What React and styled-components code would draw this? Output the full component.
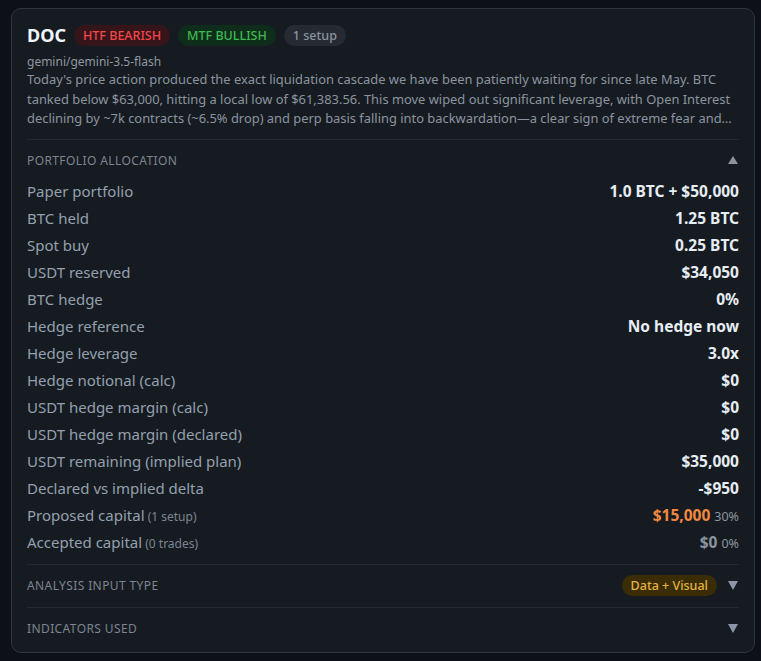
import React from 'react';
import styled, { createGlobalStyle } from 'styled-components';

const GlobalStyle = createGlobalStyle`
  body {
    margin: 0;
    background: #0d1117;
    font-family: 'Segoe UI', 'Noto Sans', 'Liberation Sans', sans-serif;
  }
`;

const Page = styled.div`
  padding: 8px 6px 6px 11px;
`;

const Card = styled.div`
  background: #161b22;
  border: 1px solid #30363d;
  border-radius: 10px;
  padding: 14px 15px 2px;
`;

const Header = styled.div`
  display: flex;
  align-items: center;
  gap: 8px;
  height: 24px;
`;

const Ticker = styled.span`
  font-size: 18px;
  font-weight: 700;
  color: #f0f6fc;
`;

const tones = {
  red: { bg: '#351519', fg: '#f5474b' },
  green: { bg: '#0f2d1b', fg: '#3fb950' },
  grey: { bg: '#262b33', fg: '#8b949e' },
  amber: { bg: '#3a2d05', fg: '#e3b341' },
};

const Pill = styled.span`
  display: inline-flex;
  align-items: center;
  height: 21px;
  padding: 0 9px;
  border-radius: 11px;
  font-size: 12.5px;
  font-weight: 500;
  background: ${p => tones[p.tone].bg};
  color: ${p => tones[p.tone].fg};
`;

const Model = styled.div`
  margin-top: 7px;
  font-size: 12px;
  line-height: 16px;
  color: #9198a1;
`;

const Summary = styled.p`
  margin: 0 0 10px;
  padding-right: 6px;
  font-size: 12.9px;
  line-height: 19.5px;
  color: #8b949e;
  display: -webkit-box;
  -webkit-line-clamp: 3;
  -webkit-box-orient: vertical;
  overflow: hidden;
`;

const Section = styled.div`
  border-top: 1px solid #262b33;
  padding: ${p => (p.open ? '12px 0 8px' : '0')};
`;

const SectionHead = styled.div`
  display: flex;
  align-items: center;
  justify-content: space-between;
  min-height: ${p => (p.open ? '16px' : '42px')};
`;

const SectionTitle = styled.span`
  font-size: 12px;
  letter-spacing: 0.4px;
  text-transform: uppercase;
  color: #7d8590;
`;

const HeadRight = styled.div`
  display: flex;
  align-items: center;
  gap: 11px;
`;

const Caret = styled.span`
  width: 0;
  height: 0;
  margin-right: 1px;
  border-left: 5px solid transparent;
  border-right: 5px solid transparent;
  ${p =>
    p.up
      ? 'border-bottom: 8px solid #8b949e;'
      : 'border-top: 9px solid #8b96a8;'}
`;

const Rows = styled.div`
  margin-top: 9px;
  display: flex;
  flex-direction: column;
`;

const Row = styled.div`
  display: flex;
  align-items: center;
  justify-content: space-between;
  height: 27px;
`;

const Label = styled.span`
  font-size: 15px;
  color: #94a0ae;
`;

const Note = styled.span`
  font-size: 12px;
  color: #7d8590;
`;

const valueColors = {
  normal: '#e6edf3',
  orange: '#f0883e',
  muted: '#8b949e',
};

const Value = styled.span`
  font-size: 15.5px;
  font-weight: 700;
  color: ${p => valueColors[p.tone || 'normal']};
`;

const Pct = styled.span`
  font-size: 12.5px;
  font-weight: 400;
  color: #8b949e;
  margin-left: 4px;
`;

const rows = [
  { label: 'Paper portfolio', value: '1.0 BTC + $50,000' },
  { label: 'BTC held', value: '1.25 BTC' },
  { label: 'Spot buy', value: '0.25 BTC' },
  { label: 'USDT reserved', value: '$34,050' },
  { label: 'BTC hedge', value: '0%' },
  { label: 'Hedge reference', value: 'No hedge now' },
  { label: 'Hedge leverage', value: '3.0x' },
  { label: 'Hedge notional (calc)', value: '$0' },
  { label: 'USDT hedge margin (calc)', value: '$0' },
  { label: 'USDT hedge margin (declared)', value: '$0' },
  { label: 'USDT remaining (implied plan)', value: '$35,000' },
  { label: 'Declared vs implied delta', value: '-$950' },
  { label: 'Proposed capital', note: '(1 setup)', value: '$15,000', pct: '30%', tone: 'orange' },
  { label: 'Accepted capital', note: '(0 trades)', value: '$0', pct: '0%', tone: 'muted' },
];

export default function App() {
  return (
    <Page>
      <GlobalStyle />
      <Card>
        <Header>
          <Ticker>DOC</Ticker>
          <Pill tone="red">HTF BEARISH</Pill>
          <Pill tone="green">MTF BULLISH</Pill>
          <Pill tone="grey">1 setup</Pill>
        </Header>
        <Model>gemini/gemini-3.5-flash</Model>
        <Summary>
          Today's price action produced the exact liquidation cascade we have been patiently waiting
          for since late May. BTC tanked below $63,000, hitting a local low of $61,383.56. This move
          wiped out significant leverage, with Open Interest declining by ~7k contracts (~6.5% drop)
          and perp basis falling into backwardation—a clear sign of extreme fear and capitulation
          among leveraged longs.
        </Summary>

        <Section open>
          <SectionHead open>
            <SectionTitle>Portfolio allocation</SectionTitle>
            <Caret up />
          </SectionHead>
          <Rows>
            {rows.map(r => (
              <Row key={r.label}>
                <Label>
                  {r.label}
                  {r.note && <Note> {r.note}</Note>}
                </Label>
                <Value tone={r.tone}>
                  {r.value}
                  {r.pct && <Pct>{r.pct}</Pct>}
                </Value>
              </Row>
            ))}
          </Rows>
        </Section>

        <Section>
          <SectionHead>
            <SectionTitle>Analysis input type</SectionTitle>
            <HeadRight>
              <Pill tone="amber">Data + Visual</Pill>
              <Caret />
            </HeadRight>
          </SectionHead>
        </Section>

        <Section>
          <SectionHead>
            <SectionTitle>Indicators used</SectionTitle>
            <Caret />
          </SectionHead>
        </Section>
      </Card>
    </Page>
  );
}
